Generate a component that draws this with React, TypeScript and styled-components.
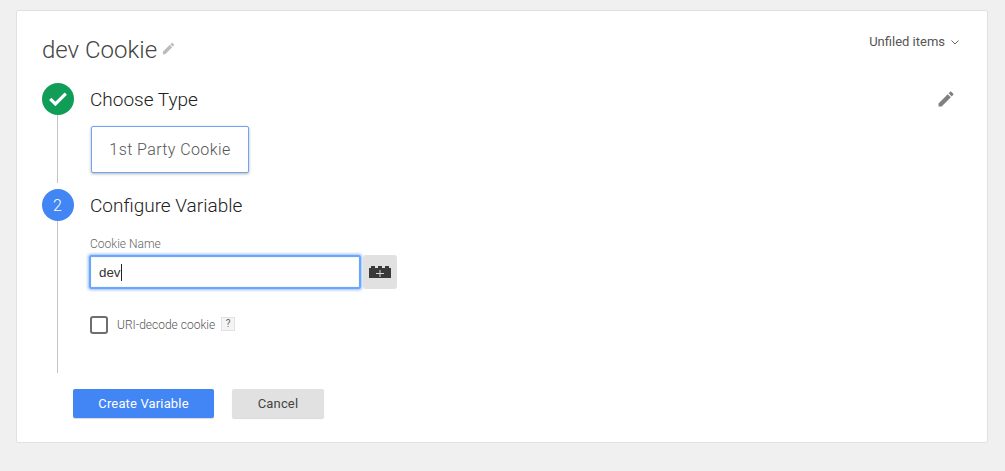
import React from "react";
import styled, { createGlobalStyle } from "styled-components";

const Global = createGlobalStyle`
  html, body { margin: 0; padding: 0; background: #f0f0f0; font-family: Roboto, "Liberation Sans", sans-serif; }
`;

const Page = styled.div`
  padding: 10px 17px 28px 16px;
  height: 471px;
  box-sizing: border-box;
`;

const Card = styled.div`
  height: 433px;
  box-sizing: border-box;
  background: #fff;
  border: 1px solid #e1e1e1;
  border-radius: 2px;
  padding: 20px 32px 0 25px;
`;

const Header = styled.div`
  display: flex;
  justify-content: space-between;
  align-items: flex-start;
  height: 52px;
`;

const Title = styled.div`
  display: flex;
  align-items: center;
  gap: 4px;
  font-size: 24px;
  font-weight: 300;
  line-height: 38px;
  color: #444;
  svg {
    margin-top: -3px;
  }
`;

const Folder = styled.div`
  display: flex;
  align-items: center;
  gap: 6px;
  font-size: 13px;
  color: #555;
  line-height: 20px;
  margin: 1px -4px 0 0;
`;

const Step = styled.div<{ $h: number }>`
  display: grid;
  grid-template-columns: 32px 1fr;
  column-gap: 16px;
  height: ${(p) => p.$h}px;
`;

const Rail = styled.div<{ $gap: number }>`
  display: flex;
  flex-direction: column;
  align-items: center;
  padding-bottom: ${(p) => p.$gap}px;
`;

const Circle = styled.div<{ $color: string }>`
  width: 32px;
  height: 32px;
  flex: none;
  border-radius: 50%;
  background: ${(p) => p.$color};
  color: #fff;
  font-size: 16px;
  font-weight: 300;
  display: flex;
  align-items: center;
  justify-content: center;
  padding-right: 1px;
  box-sizing: border-box;
`;

const RailLine = styled.div`
  flex: 1;
  width: 1px;
  margin-right: 1px;
  background: #c4c4c4;
`;

const StepBody = styled.div`
  min-width: 0;
`;

const StepHead = styled.div`
  display: flex;
  justify-content: space-between;
  align-items: center;
  height: 32px;
  font-size: 19px;
  font-weight: 300;
  color: #222;
  svg {
    margin-right: -1px;
  }
`;

const TypeCard = styled.div`
  display: inline-flex;
  align-items: center;
  justify-content: center;
  box-sizing: border-box;
  width: 158px;
  height: 47px;
  margin: 11px 0 0 1px;
  border: 1px solid #6fa4f5;
  border-radius: 2px;
  box-shadow: 0 1px 3px rgba(0, 0, 0, 0.3);
  font-size: 16px;
  font-weight: 300;
  letter-spacing: 0.4px;
  color: #555;
  background: #fff;
`;

const FieldLabel = styled.div`
  margin-top: 15px;
  font-size: 12px;
  line-height: 16px;
  font-weight: 300;
  color: #666;
`;

const FieldRow = styled.div`
  display: flex;
  align-items: center;
  gap: 2px;
  margin: 3px 0 0 -1px;
`;

const InputBox = styled.div`
  box-sizing: border-box;
  width: 272px;
  height: 34px;
  border: 2px solid #6aa6fb;
  border-radius: 2px;
  box-shadow: 0 0 3px 1px rgba(77, 144, 254, 0.6), inset 0 0 1px rgba(77, 144, 254, 0.5);
  padding: 0 8px;
  display: flex;
  align-items: center;
  font-family: "Liberation Sans", Arial, sans-serif;
  font-size: 13.33px;
  color: #333;
`;

const Caret = styled.span`
  display: inline-block;
  width: 1px;
  height: 17px;
  background: #222;
`;

const VarButton = styled.div`
  width: 34px;
  height: 34px;
  background: #e1e1e1;
  border-radius: 3px;
  display: flex;
  align-items: center;
  justify-content: center;
`;

const CheckRow = styled.div`
  display: flex;
  align-items: center;
  margin-top: 27px;
`;

const Check = styled.div`
  box-sizing: border-box;
  width: 18px;
  height: 18px;
  border: 2px solid #6e6e6e;
  border-radius: 3px;
  margin-right: 9px;
`;

const CheckLabel = styled.span`
  font-size: 12px;
  font-weight: 300;
  color: #555;
`;

const Help = styled.span`
  box-sizing: border-box;
  width: 14px;
  height: 14px;
  margin: -2px 0 0 6px;
  background: #f4f4f4;
  border: 1px solid #e2e2e2;
  font-size: 10px;
  line-height: 12px;
  text-align: center;
  color: #666;
`;

const Actions = styled.div`
  display: flex;
  gap: 18px;
  margin: 16px 0 0 31px;
`;

const Button = styled.div<{ $primary?: boolean; $w: number }>`
  width: ${(p) => p.$w}px;
  height: 29px;
  border-radius: 2px;
  display: flex;
  align-items: center;
  justify-content: center;
  font-size: 13px;
  letter-spacing: 0.15px;
  background: ${(p) => (p.$primary ? "#4285f4" : "#e1e1e1")};
  color: ${(p) => (p.$primary ? "#fff" : "#444")};
  box-shadow: 0 1px 1px rgba(0, 0, 0, 0.15);
`;

const Pencil = ({ size, color }: { size: number; color: string }) => (
  <svg width={size} height={size} viewBox="0 0 24 24" fill={color}>
    <path d="M3 17.25V21h3.75L17.81 9.94l-3.75-3.75L3 17.25zM20.71 7.04a1 1 0 0 0 0-1.41l-2.34-2.34a1 1 0 0 0-1.41 0l-1.83 1.83 3.75 3.75 1.83-1.83z" />
  </svg>
);

export default function App() {
  return (
    <Page>
      <Global />
      <Card>
        <Header>
          <Title>
            dev Cookie
            <Pencil size={15} color="#bbb" />
          </Title>
          <Folder>
            Unfiled items
            <svg width="8" height="5" viewBox="0 0 8 5" fill="none" stroke="#666" strokeWidth="1">
              <path d="M0.5 0.5 L4 4 L7.5 0.5" />
            </svg>
          </Folder>
        </Header>
        <Step $h={106}>
          <Rail $gap={6}>
            <Circle $color="#0f9d58">
              <svg width="18" height="14" viewBox="0 0 18 14" fill="none" stroke="#fff" strokeWidth="3.2">
                <path d="M1.2 6.8 L6.4 12 L16.8 1.6" />
              </svg>
            </Circle>
            <RailLine />
          </Rail>
          <StepBody>
            <StepHead>
              Choose Type
              <Pencil size={20} color="#808080" />
            </StepHead>
            <TypeCard>1st Party Cookie</TypeCard>
          </StepBody>
        </Step>
        <Step $h={184}>
          <Rail $gap={0}>
            <Circle $color="#4285f4">2</Circle>
            <RailLine />
          </Rail>
          <StepBody>
            <StepHead>Configure Variable</StepHead>
            <FieldLabel>Cookie Name</FieldLabel>
            <FieldRow>
              <InputBox>
                dev
                <Caret />
              </InputBox>
              <VarButton>
                <svg width="22" height="12" viewBox="0 0 22 12" fill="#3a3a3a">
                  <path d="M0 2h2V0h4v2h3V0h4v2h3V0h4v2h2v10H0z" />
                  <path d="M10.5 4h1v3H15v1h-3.5v3h-1V8H7V7h3.5z" fill="#d8d8d8" />
                </svg>
              </VarButton>
            </FieldRow>
            <CheckRow>
              <Check />
              <CheckLabel>URI-decode cookie</CheckLabel>
              <Help>?</Help>
            </CheckRow>
          </StepBody>
        </Step>
        <Actions>
          <Button $primary $w={141}>Create Variable</Button>
          <Button $w={92}>Cancel</Button>
        </Actions>
      </Card>
    </Page>
  );
}
